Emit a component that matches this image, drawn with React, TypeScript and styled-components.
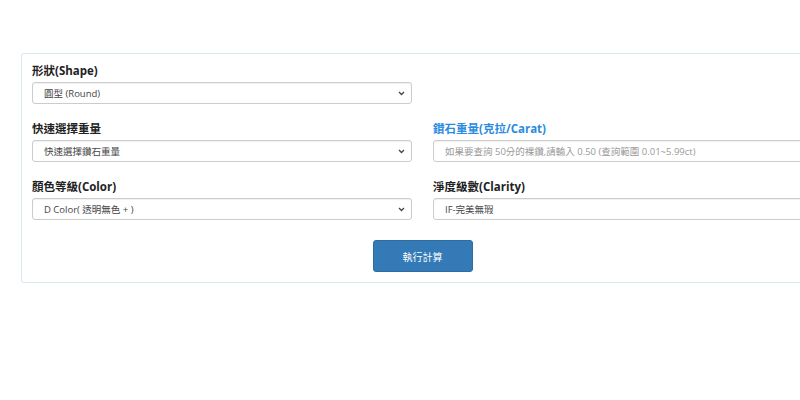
import React from "react";
import styled, { createGlobalStyle } from "styled-components";

const G = createGlobalStyle`
  html, body { margin: 0; padding: 0; background: #fff; overflow: hidden; width: 800px; height: 400px; }
  * { box-sizing: border-box; }
`;
const Page = styled.div`width: 800px; overflow: hidden; padding: 53px 0 0 21px; font-family: "Open Sans", "Noto Sans CJK TC", sans-serif;`;
const Card = styled.div`
  width: 830px; border: 1px solid #d6e9ee; border-radius: 3px;
  padding: 9px 10px 10px 10px; display: flex; flex-direction: column;
`;
const Grid = styled.div`display: grid; grid-template-columns: 380px 380px; column-gap: 21px; row-gap: 17px;`;
const Field = styled.div`display: flex; flex-direction: column; gap: 3px;`;
const Label = styled.div<{ $blue?: boolean }>`
  font-size: 11.5px; font-weight: 700; line-height: 16px; color: ${p => (p.$blue ? "#2a8be0" : "#222")};
`;
const Box = styled.div<{ $ph?: boolean }>`
  height: 22px; border: 1px solid #ccc; border-radius: 3px; box-shadow: inset 0 1px 1px rgba(0,0,0,.06);
  display: flex; align-items: center; justify-content: space-between; padding: 0 6px 0 11px;
  font-size: 9.5px; color: ${p => (p.$ph ? "#999" : "#444")};
`;
const Chev = styled.svg`width: 7px; height: 5px;`;
const Arrow = () => (
  <Chev viewBox="0 0 7 5"><path d="M1 1l2.5 2.5L6 1" fill="none" stroke="#444" strokeWidth="1.3" /></Chev>
);
const BtnRow = styled.div`width: 781px; display: flex; justify-content: center; padding-top: 20px;`;
const Btn = styled.button`
  width: 100px; height: 32px; background: #337ab7; border: 1px solid #2e6da4; border-radius: 3px;
  color: #fff; font-size: 10px; font-family: inherit;
`;

export default function App() {
  return (
    <>
      <G />
      <Page>
        <Card>
          <Grid>
            <Field>
              <Label>形狀(Shape)</Label>
              <Box>圓型 (Round)<Arrow /></Box>
            </Field>
            <div />
            <Field>
              <Label>快速選擇重量</Label>
              <Box>快速選擇鑽石重量<Arrow /></Box>
            </Field>
            <Field>
              <Label $blue>鑽石重量(克拉/Carat)</Label>
              <Box $ph>如果要查詢 50分的裸鑽,請輸入 0.50 (查詢範圍 0.01~5.99ct)</Box>
            </Field>
            <Field>
              <Label>顏色等級(Color)</Label>
              <Box>D Color( 透明無色 + )<Arrow /></Box>
            </Field>
            <Field>
              <Label>淨度級數(Clarity)</Label>
              <Box>IF-完美無瑕</Box>
            </Field>
          </Grid>
          <BtnRow><Btn>執行計算</Btn></BtnRow>
        </Card>
      </Page>
    </>
  );
}
